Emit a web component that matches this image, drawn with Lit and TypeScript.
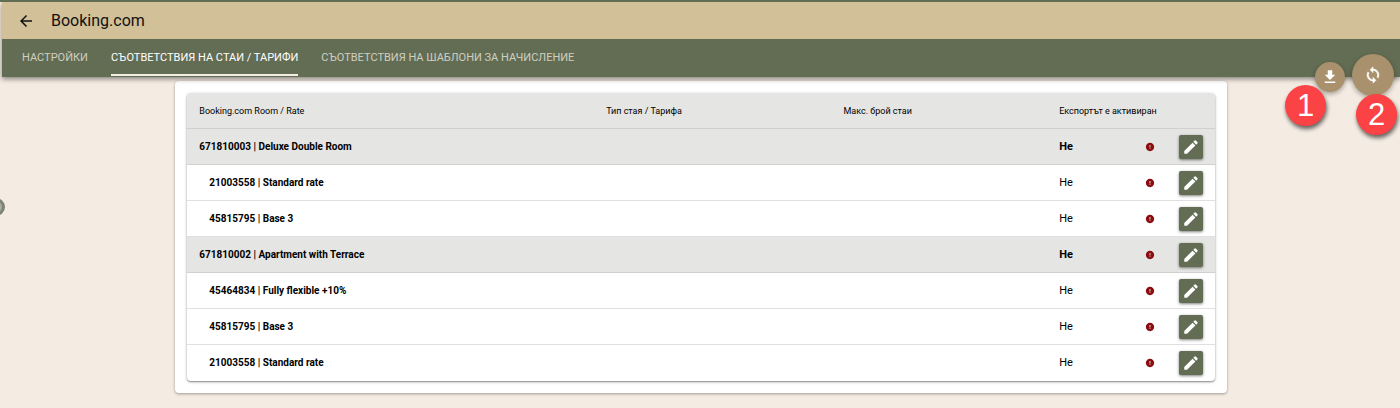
import { LitElement, html, css, svg } from "lit";
import { customElement, property, state } from "lit/decorators.js";
import { classMap } from "lit/directives/class-map.js";

interface Row {
  id: string;
  name: string;
  room: boolean;
}

const ROWS: Row[] = [
  { id: "671810003", name: "Deluxe Double Room", room: true },
  { id: "21003558", name: "Standard rate", room: false },
  { id: "45815795", name: "Base 3", room: false },
  { id: "671810002", name: "Apartment with Terrace", room: true },
  { id: "45464834", name: "Fully flexible +10%", room: false },
  { id: "45815795", name: "Base 3", room: false },
  { id: "21003558", name: "Standard rate", room: false },
];

const TABS = [
  "НАСТРОЙКИ",
  "СЪОТВЕТСТВИЯ НА СТАИ / ТАРИФИ",
  "СЪОТВЕТСТВИЯ НА ШАБЛОНИ ЗА НАЧИСЛЕНИЕ",
];

const ICONS = {
  back: svg`<path d="M20 11H7.83l5.59-5.59L12 4l-8 8 8 8 1.41-1.41L7.83 13H20v-2z"/>`,
  download: svg`<path d="M19 9h-4V3H9v6H5l7 7 7-7zM5 18v2h14v-2H5z"/>`,
  sync: svg`<path stroke="currentColor" stroke-width=".6" d="M12 4V1L8 5l4 4V6c3.31 0 6 2.69 6 6 0 1.01-.25 1.97-.7 2.8l1.46 1.46C19.54 15.03 20 13.57 20 12c0-4.42-3.58-8-8-8zm0 14c-3.31 0-6-2.69-6-6 0-1.01.25-1.97.7-2.8L5.24 7.74C4.46 8.97 4 10.43 4 12c0 4.42 3.58 8 8 8v3l4-4-4-4v3z"/>`,
  edit: svg`<path d="M3 17.25V21h3.75L17.81 9.94l-3.75-3.75L3 17.25zM20.71 7.04c.39-.39.39-1.02 0-1.41l-2.34-2.34a.996.996 0 0 0-1.41 0l-1.83 1.83 3.75 3.75 1.83-1.83z"/>`,
  error: svg`<path d="M12 2C6.48 2 2 6.48 2 12s4.48 10 10 10 10-4.48 10-10S17.52 2 12 2zm1 15h-2v-2h2v2zm0-4h-2V7h2v6z"/>`,
};

@customElement("ui-icon")
export class UiIcon extends LitElement {
  @property() name: keyof typeof ICONS = "edit";

  static styles = css`
    :host {
      display: block;
      width: 18px;
      height: 18px;
    }
    .glyph {
      display: block;
      width: 100%;
      height: 100%;
      fill: currentColor;
    }
  `;

  render() {
    return html`<svg class="glyph" viewBox="0 0 24 24" aria-hidden="true">${ICONS[this.name]}</svg>`;
  }
}

@customElement("mapping-table")
export class MappingTable extends LitElement {
  @property({ attribute: false }) rows: Row[] = [];

  static styles = css`
    :host {
      display: block;
    }
    .table {
      width: 100%;
      table-layout: fixed;
      border-spacing: 0;
      border-radius: 4px;
      overflow: hidden;
      background: #fff;
      box-shadow: 0 1px 3px rgba(0, 0, 0, 0.35), 0 1px 1px rgba(0, 0, 0, 0.2);
      font-size: 11px;
      line-height: 16px;
      color: #000;
    }
    .cell {
      box-sizing: border-box;
      height: 36px;
      padding: 0 12px;
      border-bottom: 1px solid #e0e0e0;
      text-align: left;
      font-weight: 400;
      white-space: nowrap;
    }
    .name {
      font-size: 10px;
      font-weight: 700;
    }
    .rate .name {
      padding-left: 22px;
    }
    .head .cell,
    .room .cell {
      background: #e5e5e3;
      border-bottom-color: #d0d0ce;
    }
    .head .cell {
      font-size: 9px;
    }
    .room .cell {
      font-weight: 700;
    }
    .row:last-child .cell {
      border-bottom: 0;
    }
    .c1 { width: 39.6%; }
    .c2 { width: 23.1%; }
    .c3 { width: 21%; }
    .tools {
      display: flex;
      align-items: center;
      justify-content: space-between;
    }
    .end {
      display: flex;
      align-items: center;
      gap: 24px;
    }
    .warn {
      width: 10px;
      height: 10px;
      color: #8b0d10;
    }
    .edit {
      display: grid;
      place-items: center;
      width: 24px;
      height: 24px;
      padding: 0;
      border: 0;
      border-radius: 2px;
      background: #636d54;
      color: #fff;
      box-shadow: 0 1px 3px rgba(0, 0, 0, 0.5);
    }
  `;

  render() {
    return html`
      <table class="table">
        <thead>
          <tr class="head">
            <th class="cell c1" scope="col">Booking.com Room / Rate</th>
            <th class="cell c2" scope="col">Тип стая / Тарифа</th>
            <th class="cell c3" scope="col">Макс. брой стаи</th>
            <th class="cell" scope="col">Експортът е активиран</th>
          </tr>
        </thead>
        <tbody>
          ${this.rows.map(
            (r) => html`
              <tr class=${classMap({ row: true, room: r.room, rate: !r.room })}>
                <td class="cell name">${r.id} | ${r.name}</td>
                <td class="cell"></td>
                <td class="cell"></td>
                <td class="cell">
                  <div class="tools">
                    <span>Не</span>
                    <div class="end">
                      <ui-icon class="warn" name="error"></ui-icon>
                      <button class="edit" type="button" aria-label="${r.name}">
                        <ui-icon name="edit"></ui-icon>
                      </button>
                    </div>
                  </div>
                </td>
              </tr>
            `
          )}
        </tbody>
      </table>
    `;
  }
}

@customElement("app-root")
export class AppRoot extends LitElement {
  @state() private active = 1;

  static styles = css`
    :host {
      display: block;
      position: relative;
      box-sizing: border-box;
      min-height: 100vh;
      padding-left: 2px;
      overflow: hidden;
      background: #f4ebe2;
      border-top: 2px solid #636d54;
      font-family: Roboto, "Liberation Sans", sans-serif;
    }
    .top {
      position: relative;
      box-shadow: 0 2px 5px rgba(0, 0, 0, 0.45);
    }
    .bar {
      display: flex;
      align-items: center;
      gap: 16px;
      height: 37px;
      padding-left: 15px;
      background: #d2c098;
      color: #111;
    }
    .back {
      display: block;
      padding: 0;
      border: 0;
      background: none;
      color: inherit;
    }
    .title {
      margin: 0;
      font-size: 16px;
      line-height: 20px;
      font-weight: 400;
    }
    .tabs {
      display: flex;
      gap: 23px;
      padding: 0 20px 1px;
      background: #636d54;
    }
    .tab {
      box-sizing: border-box;
      height: 37px;
      padding: 0;
      border: 0;
      border-top: 2px solid transparent;
      border-bottom: 2px solid transparent;
      background: none;
      font-family: inherit;
      font-size: 11px;
      line-height: 16px;
      color: #cfcfc0;
      white-space: nowrap;
    }
    .on {
      color: #fff;
      border-bottom-color: #f3efe6;
    }
    .card {
      box-sizing: border-box;
      width: 75.2%;
      margin: 4px 0 14px 12.4%;
      padding: 12px;
      border-radius: 4px;
      background: #fff;
      box-shadow: 0 1px 3px rgba(0, 0, 0, 0.35);
    }
    .fab {
      position: absolute;
      display: grid;
      place-items: center;
      padding: 0;
      border: 0;
      border-radius: 50%;
      background: #a8916c;
      color: #fff;
      box-shadow: 0 2px 5px rgba(0, 0, 0, 0.35);
    }
    .small {
      top: 60px;
      right: 55px;
      width: 30px;
      height: 30px;
    }
    .large {
      top: 52px;
      right: 6px;
      width: 42px;
      height: 42px;
    }
    .note {
      position: absolute;
      width: 41px;
      height: 41px;
      border-radius: 50%;
      background: #fb4245;
      color: #fff;
      box-shadow: 1px 3px 4px rgba(0, 0, 0, 0.6);
      font-family: "Liberation Sans", sans-serif;
      font-size: 31px;
      line-height: 41px;
      text-align: center;
    }
    .one {
      top: 83px;
      right: 74px;
    }
    .two {
      top: 92px;
      right: 3px;
    }
    .handle {
      position: absolute;
      box-sizing: border-box;
      top: 196px;
      left: -13px;
      width: 18px;
      height: 18px;
      border: 3px solid #7f8474;
      border-radius: 50%;
      background: #a9ad9d;
    }
  `;

  render() {
    return html`
      <header class="top">
        <div class="bar">
          <button class="back" type="button" aria-label="Назад"><ui-icon name="back"></ui-icon></button>
          <h1 class="title">Booking.com</h1>
        </div>
        <nav class="tabs" role="tablist">
          ${TABS.map(
            (label, i) => html`
              <button
                type="button"
                role="tab"
                aria-selected=${i === this.active}
                class=${classMap({ tab: true, on: i === this.active })}
                @click=${() => (this.active = i)}
              >${label}</button>
            `
          )}
        </nav>
      </header>
      <main class="card">
        <mapping-table .rows=${ROWS}></mapping-table>
      </main>
      <button class="fab small" type="button" aria-label="Изтегляне"><ui-icon name="download"></ui-icon></button>
      <button class="fab large" type="button" aria-label="Синхронизиране"><ui-icon name="sync"></ui-icon></button>
      <span class="note one">1</span>
      <span class="note two">2</span>
      <span class="handle"></span>
    `;
  }
}
